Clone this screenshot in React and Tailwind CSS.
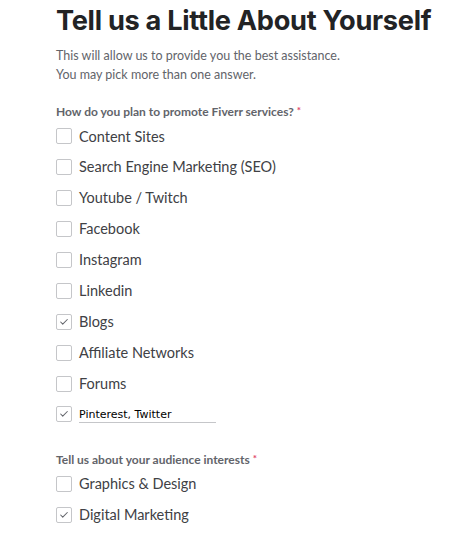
import { Check } from "lucide-react";

const promote = [
  { label: "Content Sites" },
  { label: "Search Engine Marketing (SEO)" },
  { label: "Youtube / Twitch" },
  { label: "Facebook" },
  { label: "Instagram" },
  { label: "Linkedin" },
  { label: "Blogs", checked: true },
  { label: "Affiliate Networks" },
  { label: "Forums" },
];

const interests = [
  { label: "Graphics & Design" },
  { label: "Digital Marketing", checked: true },
];

function Box({ checked }) {
  return (
    <span className="flex h-4 w-4 shrink-0 items-center justify-center rounded-[2px] border border-[#c5c6c9] bg-white">
      {checked ? <Check size={10} strokeWidth={2.5} className="text-[#62646a]" /> : null}
    </span>
  );
}

function Row({ label, checked }) {
  return (
    <label className="flex h-[30.9px] items-center gap-[7px]">
      <Box checked={checked} />
      <span className="text-[14.5px] text-[#404145]">{label}</span>
    </label>
  );
}

function Question({ children }) {
  return (
    <p className="text-[12px] font-bold text-[#62646a]">
      {children} <span className="align-top text-[10px] text-[#e0446b]">*</span>
    </p>
  );
}

export default function App() {
  return (
    <div className="min-h-dvh bg-white pl-[56px] pt-[3px] font-['Lato',sans-serif]">
      <h1 className="font-['Inter',sans-serif] text-[27.2px] font-bold leading-[36px] tracking-[-0.3px] text-[#222325]">
        Tell us a Little About Yourself
      </h1>
      <div className="mt-[7px] text-[12.5px] leading-[19px] text-[#62646a]">
        <p>This will allow us to provide you the best assistance.</p>
        <p>You may pick more than one answer.</p>
      </div>

      <div className="mt-[19px]">
        <Question>How do you plan to promote Fiverr services?</Question>
        <div>
          {promote.map((p) => (
            <Row key={p.label} {...p} />
          ))}
          <div className="flex h-[30.9px] items-center gap-[7px]">
            <Box checked />
            <span className="w-[137px] border-b border-[#c5c6c9] pt-[2px] font-['DejaVu_Sans',sans-serif] text-[11px] leading-[15px] text-black">
              Pinterest, Twitter
            </span>
          </div>
        </div>
      </div>

      <div className="mt-[21px]">
        <Question>Tell us about your audience interests</Question>
        <div>
          {interests.map((p) => (
            <Row key={p.label} {...p} />
          ))}
        </div>
      </div>
    </div>
  );
}
